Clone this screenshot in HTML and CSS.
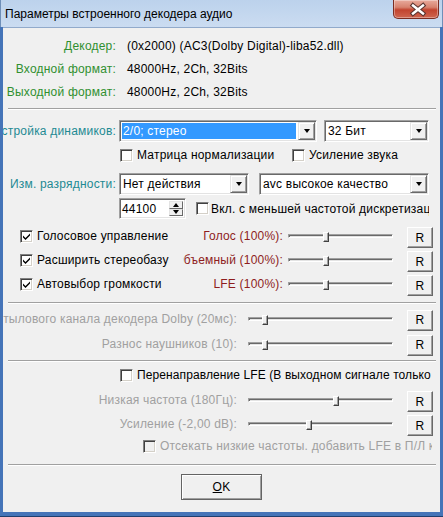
FILE: index.html
```html
<!DOCTYPE html>
<html>
<head>
<meta charset="utf-8">
<link rel="stylesheet" href="styles.css">
</head>
<body>
<div class="window">
  <div class="titlebar">
    <span class="title">Параметры встроенного декодера аудио</span>
    <div class="close">
      <svg width="46" height="19" viewBox="0 0 46 19">
        <path d="M19 5.5 L29 13.5 M29 5.5 L19 13.5" stroke="#5a3530" stroke-width="4.6" stroke-linecap="square" fill="none"/>
        <path d="M19 5.5 L29 13.5 M29 5.5 L19 13.5" stroke="#ffffff" stroke-width="2.4" stroke-linecap="square" fill="none"/>
      </svg>
    </div>
  </div>
  <div class="client">
    <div class="info">
      <div class="irow"><span class="ilbl green">Декодер:</span><span class="ival">(0x2000) (AC3(Dolby Digital)-liba52.dll)</span></div>
      <div class="irow"><span class="ilbl green">Входной формат:</span><span class="ival">48000Hz, 2Ch, 32Bits</span></div>
      <div class="irow"><span class="ilbl green">Выходной формат:</span><span class="ival">48000Hz, 2Ch, 32Bits</span></div>
    </div>
    <div class="sep"></div>

    <div class="crow first">
      <div class="clbl teal"><span>Настройка динамиков:</span></div>
      <div class="combo sel w198"><div class="field"><span>2/0; стерео</span></div><div class="dd"><i class="tri"></i></div></div>
      <div class="combo w105 gap7"><div class="field"><span>32 Бит</span></div><div class="dd"><i class="tri"></i></div></div>
    </div>
    <div class="chkrow">
      <div class="chk w172"><span class="box"></span><span class="ctext">Матрица нормализации</span></div>
      <div class="chk"><span class="box"></span><span class="ctext">Усиление звука</span></div>
    </div>
    <div class="crow second">
      <div class="clbl teal"><span>Изм. разрядности:</span></div>
      <div class="combo w130"><div class="field"><span>Нет действия</span></div><div class="dd"><i class="tri"></i></div></div>
      <div class="combo w170 gap10"><div class="field"><span>avc высокое качество</span></div><div class="dd"><i class="tri"></i></div></div>
    </div>
    <div class="spinrow">
      <div class="spin">
        <span class="spintext">44100</span>
        <div class="updown"><div class="ub"><i class="tri up"></i></div><div class="ub"><i class="tri"></i></div></div>
      </div>
      <div class="chk clip gap10"><span class="box"></span><span class="ctext">Вкл. с меньшей частотой дискретизации</span></div>
    </div>

    <div class="mix">
      <div class="mrow">
        <div class="chk mchk"><span class="box checked"><svg width="9" height="9" viewBox="0 0 9 9"><path d="M1 3.5 L3.5 6 L8 1.5 L8 3.5 L3.5 8 L1 5.5 Z" fill="#000"/></svg></span><span class="ctext">Голосовое управление</span></div>
        <div class="slbl red"><span>Голос (100%):</span></div>
        <div class="slider s105"><div class="track"></div><div class="thumb" style="left:35px"></div></div>
        <div class="rbtn">R</div>
      </div>
      <div class="mrow">
        <div class="chk mchk"><span class="box checked"><svg width="9" height="9" viewBox="0 0 9 9"><path d="M1 3.5 L3.5 6 L8 1.5 L8 3.5 L3.5 8 L1 5.5 Z" fill="#000"/></svg></span><span class="ctext">Расширить стереобазу</span></div>
        <div class="slbl red"><span>Объемный (100%):</span></div>
        <div class="slider s105"><div class="track"></div><div class="thumb" style="left:35px"></div></div>
        <div class="rbtn">R</div>
      </div>
      <div class="mrow">
        <div class="chk mchk"><span class="box checked"><svg width="9" height="9" viewBox="0 0 9 9"><path d="M1 3.5 L3.5 6 L8 1.5 L8 3.5 L3.5 8 L1 5.5 Z" fill="#000"/></svg></span><span class="ctext">Автовыбор громкости</span></div>
        <div class="slbl red"><span>LFE (100%):</span></div>
        <div class="slider s105"><div class="track"></div><div class="thumb" style="left:35px"></div></div>
        <div class="rbtn">R</div>
      </div>
    </div>
    <div class="sep s6"></div>

    <div class="delay">
      <div class="drow">
        <div class="dlbl gray"><span>Задержка тылового канала декодера Dolby (20мс):</span></div>
        <div class="slider s145"><div class="track"></div><div class="thumb" style="left:14px"></div></div>
        <div class="rbtn">R</div>
      </div>
      <div class="drow">
        <div class="dlbl gray"><span>Разнос наушников (10):</span></div>
        <div class="slider s145"><div class="track"></div><div class="thumb" style="left:14px"></div></div>
        <div class="rbtn">R</div>
      </div>
    </div>
    <div class="sep s4"></div>

    <div class="lferow">
      <div class="chk clip"><span class="box"></span><span class="ctext">Перенаправление LFE (В выходном сигнале только 2 канала)</span></div>
    </div>
    <div class="lrow">
      <div class="dlbl gray"><span>Низкая частота (180Гц):</span></div>
      <div class="slider s145"><div class="track"></div><div class="thumb" style="left:85px"></div></div>
      <div class="rbtn">R</div>
    </div>
    <div class="lrow">
      <div class="dlbl gray"><span>Усиление (-2,00 dB):</span></div>
      <div class="slider s145"><div class="track"></div><div class="thumb" style="left:58px"></div></div>
      <div class="rbtn">R</div>
    </div>
    <div class="cutrow">
      <div class="chk clip disabled"><span class="box"></span><span class="ctext">Отсекать низкие частоты. добавить LFE в П/Л каналы</span></div>
    </div>
    <div class="sep s8"></div>
    <div class="okrow">
      <div class="okbtn"><u>O</u>K</div>
    </div>
  </div>
</div>
</body>
</html>
```
FILE: styles.css
```css
* { box-sizing: border-box; }
html, body { margin: 0; padding: 0; }
body {
  width: 443px;
  height: 517px;
  overflow: hidden;
  font-family: "Liberation Sans", Arial, sans-serif;
  font-size: 12px;
  color: #000;
  background: #fff;
}
.window {
  width: 443px;
  height: 517px;
  display: flex;
  flex-direction: column;
  background: #4574b8;
  padding: 0 3px 4px 3px;
  border-bottom: 1px solid #1f3f6e;
}
.titlebar {
  height: 27px;
  margin: 0 -3px;
  display: flex;
  align-items: flex-start;
  background: linear-gradient(#bcd2ec, #cbdcf1);
  border-left: 1px solid #6f8fb8;
  border-right: 1px solid #6f8fb8;
  padding-left: 4px;
}
.title {
  padding-top: 6px;
  line-height: 16px;
  font-size: 12px;
  color: #000;
  white-space: nowrap;
}
.close {
  margin-left: auto;
  margin-right: 3px;
  width: 46px;
  height: 19px;
  border: 1px solid #7b2d22;
  border-top: none;
  border-radius: 0 0 5px 5px;
  background: linear-gradient(#e8aa9c 0%, #d7836f 40%, #c2442f 55%, #cf6650 100%);
  box-shadow: inset 0 0 0 1px rgba(255,255,255,0.35);
}
.close svg { display: block; }
.client {
  flex: 1;
  background: #f0f0f0;
  border-top: 1px solid #91aacb;
  overflow: hidden;
  letter-spacing: 0.2px;
}
.green { color: #2f8f2f; }
.teal { color: #1e8a93; }
.red { color: #8e1d1d; }
.gray { color: #a0a0a0; }

.info { padding-top: 6px; }
.irow { height: 23px; display: flex; align-items: center; white-space: nowrap; }
.ilbl { width: 113px; text-align: right; }
.ival { margin-left: 11px; }

.sep {
  height: 2px;
  border-top: 1px solid #a0a0a0;
  border-bottom: 1px solid #fff;
  margin: 5px 4px 0 5px;
}
.sep.s6 { margin-top: 6px; }
.sep.s4 { margin-top: 4px; }
.sep.s8 { margin-top: 8px; }

.crow { display: flex; align-items: center; height: 22px; }
.crow.first { margin-top: 10px; }
.crow.second { margin-top: 8px; }
.clbl, .slbl, .dlbl {
  display: flex;
  justify-content: flex-end;
  overflow: hidden;
  white-space: nowrap;
  flex-shrink: 0;
}
.clbl span, .slbl span, .dlbl span { flex-shrink: 0; }
.clbl { width: 113px; margin-right: 3px; }

.combo {
  height: 22px;
  display: flex;
  background: #fff;
  border: 1px solid;
  border-color: #a0a0a0 #fff #fff #a0a0a0;
  box-shadow: inset 1px 1px 0 #696969, inset -1px -1px 0 #e3e3e3;
  padding: 2px 2px 2px 2px;
  flex-shrink: 0;
}
.w198 { width: 198px; }
.w105 { width: 105px; }
.w130 { width: 130px; }
.w170 { width: 170px; }
.gap7 { margin-left: 7px; }
.gap10 { margin-left: 10px; }
.field {
  flex: 1;
  display: flex;
  align-items: center;
  padding-left: 1px;
  white-space: nowrap;
  overflow: hidden;
}
.sel .field { background: #3399ff; color: #fff; margin-right: 2px; }
.dd {
  width: 17px;
  height: 18px;
  margin: -1px -1px 0 0;
  background: #f0f0f0;
  border: 1px solid;
  border-color: #e3e3e3 #696969 #696969 #e3e3e3;
  box-shadow: inset 1px 1px 0 #fff, inset -1px -1px 0 #a0a0a0;
  display: flex;
  align-items: center;
  justify-content: center;
}
.tri {
  display: block;
  width: 0;
  height: 0;
  border-left: 3.5px solid transparent;
  border-right: 3.5px solid transparent;
  border-top: 4px solid #000;
}
.tri.up { border-top: none; border-bottom: 4px solid #000; }

.chkrow { display: flex; align-items: center; height: 20px; margin-top: 3px; padding-left: 117px; }
.chk { display: flex; align-items: center; white-space: nowrap; flex-shrink: 0; }
.w172 { width: 172px; }
.box {
  width: 13px;
  height: 13px;
  flex-shrink: 0;
  background: #fff;
  border: 1px solid;
  border-color: #808080 #fff #fff #808080;
  box-shadow: inset 1px 1px 0 #404040, inset -1px -1px 0 #d4d0c8;
  display: flex;
  align-items: center;
  justify-content: center;
  margin-right: 4px;
}
.box svg { display: block; margin: 1px 0 0 0; }
.clip { flex: 1; min-width: 0; overflow: hidden; }
.clip .ctext { overflow: hidden; }
.disabled .box { background: #f0f0f0; }
.disabled .ctext { color: #a0a0a0; }

.spinrow { display: flex; align-items: center; height: 21px; margin-top: 3px; padding-left: 116px; padding-right: 11px; }
.spin {
  width: 67px;
  height: 21px;
  flex-shrink: 0;
  display: flex;
  background: #fff;
  border: 1px solid;
  border-color: #a0a0a0 #fff #fff #a0a0a0;
  box-shadow: inset 1px 1px 0 #696969, inset -1px -1px 0 #e3e3e3;
  padding: 2px;
}
.spintext { flex: 1; display: flex; align-items: center; padding-left: 0; }
.updown { width: 14px; display: flex; flex-direction: column; }
.ub {
  flex: 1;
  background: #f0f0f0;
  border: 1px solid;
  border-color: #e3e3e3 #696969 #696969 #e3e3e3;
  display: flex;
  align-items: center;
  justify-content: center;
}
.spinrow .chk .box { margin-right: 2px; }

.mix { margin-top: 5px; }
.mrow { display: flex; align-items: center; height: 24px; padding-left: 17px; }
.mchk { width: 163px; overflow: hidden; }
.slbl { width: 100px; margin-right: 5px; }
.slider { position: relative; height: 20px; flex-shrink: 0; }
.s105 { width: 105px; }
.s145 { width: 145px; }
.track {
  position: absolute;
  left: 0;
  right: 0;
  top: 8px;
  height: 4px;
  border: 1px solid;
  border-color: #a0a0a0 #fff #fff #a0a0a0;
  box-shadow: inset 1px 1px 0 #696969;
  background: #e3e3e3;
}
.thumb {
  position: absolute;
  top: 6px;
  width: 6px;
  height: 10px;
  background: #f0f0f0;
  border: 1px solid;
  border-color: #fff #404040 #404040 #fff;
  box-shadow: inset -1px -1px 0 #a0a0a0;
}
.rbtn {
  width: 26px;
  height: 21px;
  margin-left: 14px;
  margin-top: 3px;
  flex-shrink: 0;
  background: #f0f0f0;
  border: 1px solid;
  border-color: #fff #696969 #696969 #fff;
  box-shadow: inset -1px -1px 0 #a0a0a0;
  display: flex;
  align-items: center;
  justify-content: center;
}

.delay { margin-top: 2px; }
.drow { display: flex; align-items: center; height: 25px; }
.dlbl { width: 234px; margin-right: 11px; }

.lferow { display: flex; align-items: center; height: 26px; padding-left: 117px; padding-right: 8px; margin-top: 0; }
.lferow .ctext { letter-spacing: 0.1px; }
.lrow { display: flex; align-items: center; height: 24px; }
.cutrow { display: flex; align-items: center; height: 20px; padding-left: 140px; padding-right: 8px; }

.okrow { display: flex; justify-content: center; margin-top: 8px; padding-left: 0; }
.okbtn {
  width: 81px;
  height: 26px;
  background: #f0f0f0;
  border: 1px solid #646464;
  box-shadow: inset 1px 1px 0 #fff, inset -1px -1px 0 #a0a0a0;
  display: flex;
  align-items: center;
  justify-content: center;
}
.okbtn u { text-decoration: underline; }
```
